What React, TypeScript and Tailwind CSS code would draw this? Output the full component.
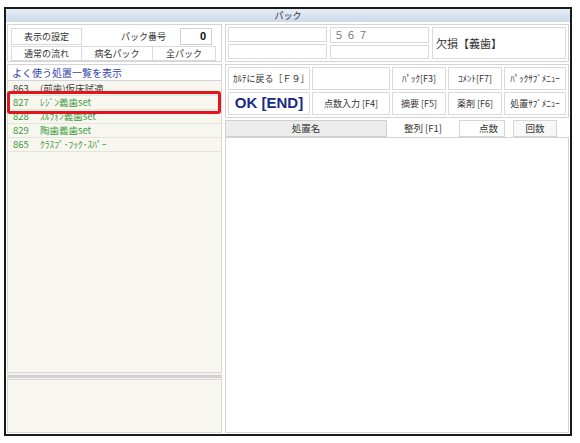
import React from 'react';

type PackRow = { code: string; name: string; tone: 'dark' | 'green' };

const rows: PackRow[] = [
    { code: '863', name: '(前歯)仮床試適', tone: 'dark' },
    { code: '827', name: 'ﾚｼﾞﾝ義歯set', tone: 'green' },
    { code: '828', name: 'ｽﾙﾌｫﾝ義歯set', tone: 'green' },
    { code: '829', name: '陶歯義歯set', tone: 'green' },
    { code: '865', name: 'ｸﾗｽﾌﾟ･ﾌｯｸ･ｽﾊﾟｰ', tone: 'green' },
];

function Cell({ children, className = '' }: { children?: React.ReactNode; className?: string }) {
    return (
        <div className={`border border-[#dadada] bg-white flex items-center justify-center whitespace-nowrap ${className}`}>
            {children}
        </div>
    );
}

function LeftColumn() {
    return (
        <div className="w-[215px] flex flex-col min-h-0">
            {/* 表示設定 / パック番号 */}
            <div className="h-[38px] border border-[#d4d4d4] bg-white px-[3px] pt-[3px] pb-[1px] flex flex-col gap-[1px]">
                <div className="h-[17px] flex items-center">
                    <Cell className="w-[71px] h-full bg-[#fbfbfb] text-[9px]">表示の設定</Cell>
                    <div className="flex-1" />
                    <span className="text-[9px] mr-[14px]">パック番号</span>
                    <div className="w-[32px] h-[17px] border border-[#cfcfcf] bg-white text-right pr-[5px] font-bold text-[11px] leading-[15px] text-[#111] font-['Liberation_Sans',sans-serif]">
                        0
                    </div>
                    <div className="w-[6px]" />
                </div>
                <div className="h-[15px] flex text-[9px]">
                    <Cell className="w-[71px] h-full">通常の流れ</Cell>
                    <Cell className="w-[71px] h-full border-l-0">病名パック</Cell>
                    <Cell className="flex-1 h-full border-l-0 mr-[2px]">全パック</Cell>
                </div>
            </div>

            <div className="mt-[2px] h-[17px] border border-[#d4d4d4] bg-white text-[10px] leading-[15px] text-[#3444a6] px-[4px]">
                よく使う処置一覧を表示
            </div>

            <div className="relative flex-1 border border-[#d8d8d8] border-t-0 bg-[#f7f7ef] pt-[1px]">
                {rows.map((r) => (
                    <div
                        key={r.code}
                        className={`h-[14px] border-b border-[#e4e4d8] flex items-center pl-[5px] text-[9.5px] ${
                            r.tone === 'green' ? 'text-[#3f9b3f]' : 'text-[#444]'
                        }`}
                    >
                        <span className="w-[27px]">{r.code}</span>
                        <span>{r.name}</span>
                    </div>
                ))}
                {/* highlight */}
                <div className="absolute left-[-1px] right-[0px] top-[10px] h-[23px] border-[3px] border-[#e3141c] rounded-[3px]" />
            </div>

            <div className="h-[6px] flex flex-col justify-center bg-[#f2f2ee]">
                <div className="h-[3px] bg-[#d2d2d2]" />
            </div>

            <div className="h-[54px] border border-[#d8d8d8] bg-[#f7f7ef]" />
        </div>
    );
}

function RightColumn() {
    return (
        <div className="flex-1 flex flex-col min-h-0">
            {/* 上段 */}
            <div className="h-[38px] border border-[#d4d4d4] bg-white p-[2px] flex gap-[3px]">
                <div className="w-[99px] flex flex-col gap-[2px]">
                    <Cell className="flex-1" />
                    <Cell className="flex-1" />
                </div>
                <div className="w-[99px] flex flex-col gap-[2px]">
                    <div className="flex-1 border border-[#dadada] text-[10px] leading-[14px] text-[#777] tracking-[2px] px-[3px]">
                        ５６７
                    </div>
                    <Cell className="flex-1" />
                </div>
                <div className="flex-1 border border-[#dadada] flex items-center px-[3px] text-[11px] text-[#333]">
                    欠損【義歯】
                </div>
            </div>

            {/* ボタン */}
            <div className="mt-[2px] h-[54px] border border-[#d4d4d4] bg-white p-[2px] grid grid-cols-[82px_78px_54px_54px_1fr] grid-rows-2 gap-x-[2px] gap-y-[2px] text-[9px]">
                <Cell className="justify-start pl-[4px]">ｶﾙﾃに戻る［Ｆ９］</Cell>
                <Cell />
                <Cell>ﾊﾟｯｸ[F3]</Cell>
                <Cell>ｺﾒﾝﾄ[F7]</Cell>
                <Cell>ﾊﾟｯｸｻﾌﾞﾒﾆｭｰ</Cell>
                <Cell className="text-[15px] font-bold text-[#1b2a8a] font-['Liberation_Sans','Noto_Sans_CJK_JP',sans-serif]">
                    OK [END]
                </Cell>
                <Cell>点数入力 [F4]</Cell>
                <Cell>摘要 [F5]</Cell>
                <Cell>薬剤 [F6]</Cell>
                <Cell>処置ｻﾌﾞﾒﾆｭｰ</Cell>
            </div>

            {/* 見出し */}
            <div className="mt-[2px] h-[17px] flex text-[9.5px]">
                <div className="w-[162px] border border-[#d0d0d0] bg-[#ececec] flex items-center justify-center">処置名</div>
                <div className="w-[66px] ml-[3px] bg-white flex items-center justify-center">整列 [F1]</div>
                <div className="w-[46px] ml-[3px] border border-[#d6d6d6] bg-white flex items-center justify-end pr-[6px]">点数</div>
                <div className="w-[44px] ml-[8px] border border-[#d6d6d6] bg-[#f8f8f8] flex items-center justify-center">回数</div>
            </div>

            <div className="flex-1 border border-[#d4d4d4] bg-white" />
        </div>
    );
}

export default function App() {
    return (
        <div className="w-[580px] h-[443px] bg-white pt-[7px] pl-[4px] font-['Noto_Sans_CJK_JP','Noto_Sans',sans-serif] text-[#333]">
            <div className="w-[568px] h-[429px] border-2 border-[#1a1a1a] bg-white flex flex-col">
                <div className="h-[13px] bg-gradient-to-b from-[#e7eef7] to-[#cbd9ea] text-[9px] leading-[13px] text-center text-[#333]">
                    パック
                </div>
                <div className="flex-1 flex gap-[3px] px-[1px] pt-[2px] pb-[1px] min-h-0">
                    <LeftColumn />
                    <RightColumn />
                </div>
            </div>
        </div>
    );
}
